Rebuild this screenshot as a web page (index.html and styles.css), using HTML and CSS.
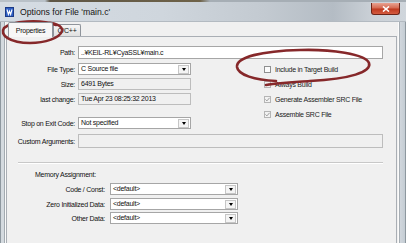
FILE: index.html
```html
<!DOCTYPE html>
<html>
<head>
<meta charset="utf-8">
<title>Options for File 'main.c'</title>
<link rel="stylesheet" href="styles.css">
</head>
<body>
<div class="window">
  <div class="topedge"></div>
  <div class="titlebar">
    <svg class="appicon" width="9" height="10" viewBox="0 0 9 10">
      <rect x="0.5" y="0.5" width="8" height="9" fill="#2f5fc4" stroke="#1b3a86"/>
      <path d="M2 2.5 L3.4 7.5 L4.5 4.3 L5.6 7.5 L7 2.5" fill="none" stroke="#fff" stroke-width="1.1"/>
    </svg>
    <span class="title">Options for File 'main.c'</span>
    <div class="close">
      <svg width="8" height="6" viewBox="0 0 8 6"><path d="M1 0.5 L7 5.5 M7 0.5 L1 5.5" stroke="#fff" stroke-width="1.6"/></svg>
    </div>
  </div>
  <div class="frame">
    <div class="lframe"></div>
    <div class="client">
      <div class="tabs">
        <div class="tab active">Properties</div>
        <div class="tab cpp">C/C++</div>
      </div>
      <div class="page">
        <div class="row">
          <span class="lbl">Path:</span>
          <div class="field wide path">..¥KEIL-RL¥CyaSSL¥main.c</div>
        </div>
        <div class="mid">
          <div class="leftcol">
            <div class="row">
              <span class="lbl">File Type:</span>
              <div class="field combo"><span>C Source file</span><span class="dd"></span></div>
            </div>
            <div class="row">
              <span class="lbl">Size:</span>
              <div class="field ro short">6491 Bytes</div>
            </div>
            <div class="row">
              <span class="lbl">last change:</span>
              <div class="field ro short">Tue Apr 23 08:25:32 2013</div>
            </div>
            <div class="row stop">
              <span class="lbl">Stop on Exit Code:</span>
              <div class="field combo"><span>Not specified</span><span class="dd"></span></div>
            </div>
          </div>
          <div class="checks">
            <div class="chk"><span class="box"></span>Include in Target Build</div>
            <div class="chk"><span class="box dis"><svg width="5" height="5" viewBox="0 0 5 5"><path d="M0.4 2.4 L1.9 3.9 L4.6 0.8" fill="none" stroke="#9c9c9c" stroke-width="1"/></svg></span>Always Build</div>
            <div class="chk"><span class="box dis"><svg width="5" height="5" viewBox="0 0 5 5"><path d="M0.4 2.4 L1.9 3.9 L4.6 0.8" fill="none" stroke="#9c9c9c" stroke-width="1"/></svg></span>Generate Assembler SRC File</div>
            <div class="chk"><span class="box dis"><svg width="5" height="5" viewBox="0 0 5 5"><path d="M0.4 2.4 L1.9 3.9 L4.6 0.8" fill="none" stroke="#9c9c9c" stroke-width="1"/></svg></span>Assemble SRC File</div>
          </div>
        </div>
        <div class="row custom">
          <span class="lbl">Custom Arguments:</span>
          <div class="field ro wide args"></div>
        </div>
        <div class="sep"></div>
        <div class="memtitle">Memory Assignment:</div>
        <div class="row mem m1">
          <span class="mlbl">Code / Const:</span>
          <div class="field combo mcombo"><span>&lt;default&gt;</span><span class="dd"></span></div>
        </div>
        <div class="row mem m2">
          <span class="mlbl">Zero Initialized Data:</span>
          <div class="field combo mcombo"><span>&lt;default&gt;</span><span class="dd"></span></div>
        </div>
        <div class="row mem m3">
          <span class="mlbl">Other Data:</span>
          <div class="field combo mcombo"><span>&lt;default&gt;</span><span class="dd"></span></div>
        </div>
      </div>
    </div>
    <div class="rframe"></div>
  </div>
  <svg class="annot" width="406" height="243" viewBox="0 0 406 243">
    <path d="M56 25 C40 19, 12 21, 4 28 C-1 35, 10 43, 30 43 C45 43, 60 38, 62 31 C63 26, 55 22, 40 22" fill="none" stroke="#86282a" stroke-width="2.6" stroke-linecap="round"/>
    <path d="M266 85 C283 82, 298 82, 310 81 C350 79, 372 72, 369 63 C366 54, 330 49, 300 50 C262 51, 236 57, 237 67 C238 75, 255 80, 276 81" fill="none" stroke="#86282a" stroke-width="2.6" stroke-linecap="round"/>
  </svg>
</div>
</body>
</html>
```

FILE: styles.css
```css
* { box-sizing: border-box; }
html, body { margin: 0; padding: 0; }
body {
  width: 406px;
  height: 243px;
  overflow: hidden;
  font-family: "Liberation Sans", Arial, sans-serif;
  font-size: 7px;
  letter-spacing: -0.25px;
  color: #111;
}
.window {
  position: relative;
  width: 406px;
  height: 243px;
  display: flex;
  flex-direction: column;
  background: #c6cfd8;
}
.topedge {
  height: 2px;
  flex: none;
  background: linear-gradient(to right, #b9c1c8 0, #b9c1c8 45px, #5e5646 50px, #6e6248 200px, #a6aeb5 210px, #a6aeb5 100%);
}
.titlebar {
  height: 20px;
  flex: none;
  display: flex;
  align-items: center;
  padding-left: 5px;
  background: linear-gradient(to right, #d5dce3 0%, #cfd6dd 40%, #c3cad1 65%, #b4bcc4 82%, #cbd1d7 92%, #d0d6dc 100%);
  border-bottom: 1px solid #b3bac1;
}
.appicon { flex: none; margin-top: 1px; }
.title {
  margin-left: 6px;
  font-size: 8.7px;
  letter-spacing: 0;
  color: #151515;
}
.close {
  margin-left: auto;
  align-self: flex-start;
  margin-top: 1px;
  margin-right: 6px;
  width: 29px;
  height: 12px;
  border: 1px solid #6d2418;
  border-top: none;
  border-radius: 0 0 3px 3px;
  background: linear-gradient(#e8a291, #d56a52 45%, #bf3a20 55%, #d45c40);
  display: flex;
  align-items: center;
  justify-content: center;
}
.frame {
  flex: 1;
  display: flex;
  min-height: 0;
}
.lframe {
  width: 6px;
  flex: none;
  background: linear-gradient(to right, #8e989f 0, #8e989f 1px, #d4dadf 1px, #d4dadf 4px, #a3aab0 4px, #a3aab0 5px, #fafafa 5px);
}
.rframe {
  width: 8px;
  flex: none;
  background: linear-gradient(to right, #fbfbfb 0, #fbfbfb 1px, #a7aeb4 1px, #a7aeb4 2px, #d1d7dd 2px, #c4ccd3 7px, #8e989f 7px);
}
.client {
  flex: 1;
  min-width: 0;
  display: flex;
  flex-direction: column;
  background: #f0f0f0;
}
.tabs {
  height: 14px;
  flex: none;
  display: flex;
  align-items: flex-end;
  padding-left: 2px;
}
.tab {
  height: 12px;
  border: 1px solid #8f949b;
  border-bottom: none;
  border-radius: 2px 2px 0 0;
  background: linear-gradient(#f6f6f6, #e0e0e0);
  display: flex;
  align-items: center;
  justify-content: center;
}
.tab.active {
  width: 45px;
  height: 15px;
  margin-bottom: -1px;
  background: #f7f7f7;
  position: relative;
  z-index: 1;
}
.tab.cpp { width: 28px; }
.page {
  flex: 1;
  margin-right: 1px;
  border: 1px solid #a9aeb4;
  border-bottom: none;
  padding-top: 9px;
  display: flex;
  flex-direction: column;
}
.row {
  display: flex;
  align-items: center;
  flex: none;
}
.lbl {
  width: 71px;
  flex: none;
  text-align: right;
  padding-right: 3px;
  white-space: nowrap;
}
.field {
  height: 12px;
  border: 1px solid #a6a6a6;
  background: #fff;
  padding-left: 2px;
  line-height: 10px;
  white-space: nowrap;
  overflow: hidden;
  flex: none;
}
.wide { width: 305px; }
.path { height: 13px; line-height: 11px; }
.ro { background: #f0f0f0; border-color: #bdbdbd; }
.short { width: 113px; }
.combo {
  width: 113px;
  display: flex;
  align-items: center;
  justify-content: space-between;
  padding: 0 1px 0 2px;
}
.dd {
  width: 11px;
  height: 9px;
  background: #f4f4f4;
  border: 1px solid #c6c6c6;
  display: flex;
  align-items: center;
  justify-content: center;
}
.dd::after {
  content: "";
  border-left: 2.5px solid transparent;
  border-right: 2.5px solid transparent;
  border-top: 3px solid #000;
}
.mid {
  display: flex;
  margin-top: 3px;
  flex: none;
}
.leftcol {
  display: flex;
  flex-direction: column;
  padding-top: 1px;
}
.leftcol .row + .row { margin-top: 3px; }
.leftcol .row.stop { margin-top: 12px; }
.checks {
  margin-left: 73px;
  display: flex;
  flex-direction: column;
}
.chk {
  height: 15px;
  display: flex;
  align-items: center;
  white-space: nowrap;
  color: #222;
}
.box {
  width: 7px;
  height: 7px;
  border: 1px solid #8e8f8f;
  background: #fbfbfb;
  margin-right: 4px;
  display: flex;
  align-items: center;
  justify-content: center;
  flex: none;
}
.box.dis { border-color: #b5b5b5; background: #f2f2f2; }
.custom { margin-top: 5px; }
.args { height: 14px; }
.sep {
  margin: 14px 0 0 11px;
  width: 365px;
  height: 2px;
  border-top: 1px solid #c8c8c8;
  border-bottom: 1px solid #ffffff;
  flex: none;
}
.memtitle {
  margin: 5px 0 0 28px;
  height: 12px;
  line-height: 12px;
  flex: none;
}
.mlbl {
  width: 103px;
  flex: none;
  text-align: right;
  padding-right: 5px;
  white-space: nowrap;
}
.mcombo { width: 128px; }
.m1 { margin-top: 2px; }
.m2 { margin-top: 3px; }
.m3 { margin-top: 2px; }
.annot {
  position: absolute;
  left: 0;
  top: 0;
  pointer-events: none;
}
```
